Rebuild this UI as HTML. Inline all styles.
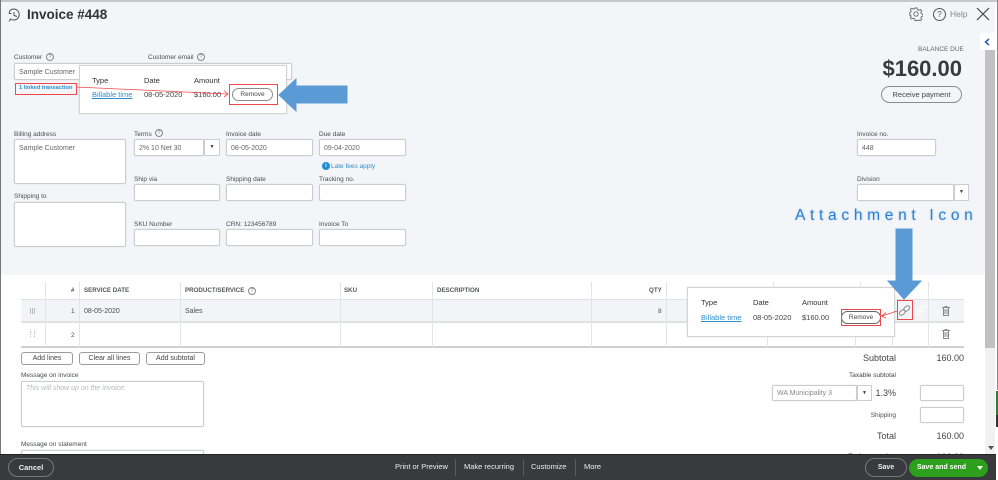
<!DOCTYPE html>
<html><head><meta charset="utf-8"><title>Invoice #448</title>
<style>
html,body{margin:0;padding:0;background:#fff}
#p{position:relative;width:998px;height:480px;overflow:hidden;background:#fff;font-family:"Liberation Sans",sans-serif;color:#444;filter:blur(.35px)}
#p div{position:absolute;box-sizing:border-box;white-space:nowrap}
.l{font-size:6.5px;line-height:9px;color:#4a4c50;margin-top:1px}
.i{background:#fff;border:1px solid #cbcdd0;border-radius:2px;font-size:7px;line-height:17px;padding-left:4px;color:#666;height:17px;box-shadow:0 0 1px #c8cacd}
.h{font-size:6.2px;line-height:9px;font-weight:bold;color:#55575b}
.v{background:#e3e5e8;width:1px}
.b{background:#fff;border:1px solid #9a9c9f;border-radius:3px;font-size:7px;line-height:11px;height:13px;text-align:center;color:#444}
.pop{background:#fff;border:1px solid #d3d4d6}
.lnk{color:#2b8fce;text-decoration:underline;font-size:7.5px;line-height:10px}
.t{font-size:7.5px;line-height:10px;color:#444}
.tb{font-size:7.5px;line-height:10px;color:#333}
.rm{background:#fff;border:1px solid #8a8c8f;border-radius:7px;text-align:center;font-size:6.5px;color:#444}
.red{border:1px solid #f0474c}
.q{border:1px solid #888;border-radius:50%;width:8px;height:8px;font-size:5.5px;line-height:6px;text-align:center;color:#777}
.f{color:#eee;font-size:7.5px;line-height:10px;top:462px}
.sep{background:#5b5c60;width:1px;top:459px;height:17px}
.s{font-size:9px;line-height:11px;color:#444;text-align:right}
</style></head><body><div id="p">
<div style="left:0;top:0;width:998px;height:2px;background:#c6c7c9"></div>
<div style="left:0;top:2px;width:985px;height:273px;background:#f4f5f8"></div>
<div style="left:0;top:0;width:1px;height:455px;background:#777"></div>
<div style="left:985px;top:2px;width:10px;height:48px;background:#f4f5f8"></div>
<div style="left:985px;top:50px;width:10px;height:298px;background:#c1c1c1"></div>
<div style="left:985px;top:348px;width:10px;height:107px;background:#f1f1f1"></div>
<div style="left:988px;top:446px;width:0;height:0;border-left:3px solid transparent;border-right:3px solid transparent;border-top:4px solid #555"></div>
<div style="left:997px;top:0;width:1px;height:390px;background:#888"></div>
<div style="left:996px;top:391px;width:2px;height:24px;background:#2e7d32"></div>
<div style="left:996px;top:415px;width:2px;height:12px;background:#333"></div>
<div style="left:980px;top:33px;width:15px;height:17px;background:#fff"></div>
<svg style="position:absolute;left:984px;top:38px" width="6" height="8" fill="none" stroke="#2a5db0" stroke-width="1.500"><path d="M5 1L1.500 4L5 7"/></svg>

<svg style="position:absolute;left:7px;top:7px" width="15" height="16" viewBox="0 0 15 16" fill="none" stroke="#555" stroke-width="1"><path d="M3 3.500A5.500 5.500 0 1 1 3.500 12L2 14.500M3 3.500L2 6.500M2 6.500H4.500"/><path d="M7 5V8.500L10 9.500"/></svg>
<div style="left:27px;top:6px;font-size:13.5px;line-height:17px;font-weight:bold;color:#333">Invoice #448</div>

<svg style="position:absolute;left:909px;top:7px" width="14" height="14" viewBox="0 0 14 14" fill="none" stroke="#666" stroke-width=".9"><circle cx="7" cy="7" r="2.200"/><path d="M6 1h2l.4 1.700 1.500.7 1.500-.9 1.300 1.400-.9 1.500.6 1.400 1.600.4v2l-1.600.4-.6 1.500.9 1.400-1.300 1.400-1.500-.9-1.500.6L8 13.500H6l-.4-1.700-1.500-.6-1.500.9-1.300-1.400.9-1.400-.6-1.500L0 7.900v-2l1.600-.4.6-1.400-.9-1.500L2.600 1.200l1.500.9 1.500-.7z"/></svg>
<div style="left:933px;top:8px;width:13px;height:13px;border:1px solid #555;border-radius:50%;font-size:8px;line-height:11px;text-align:center;color:#555">?</div>
<div style="left:950px;top:9px;font-size:8.5px;line-height:10px;color:#888">Help</div>
<svg style="position:absolute;left:976px;top:7px" width="14" height="14" viewBox="0 0 14 14" stroke="#444" stroke-width="1.200"><path d="M1 1L13 13M13 1L1 13"/></svg>

<div class="l" style="left:918px;top:44px;color:#666">BALANCE DUE</div>
<div style="left:860px;top:57px;width:102px;text-align:right;font-size:22px;line-height:24px;font-weight:bold;color:#393a3d">$160.00</div>
<div style="left:881px;top:86px;width:81px;height:17px;border:1px solid #8a8c8f;border-radius:9px;font-size:7.5px;line-height:15px;text-align:center;color:#444">Receive payment</div>

<div class="l" style="left:14px;top:52px">Customer</div><div class="q" style="left:46px;top:53px">?</div>
<div class="l" style="left:148px;top:52px">Customer email</div><div class="q" style="left:197px;top:53px">?</div>
<div class="i" style="left:14px;top:63px;width:278px;height:17px">Sample Customer</div>

<div class="pop" style="left:79px;top:65px;width:208px;height:49px;box-shadow:0 0 1px #ccc"></div>
<div class="tb" style="left:92px;top:76px">Type</div><div class="tb" style="left:144px;top:76px">Date</div><div class="tb" style="left:194px;top:76px">Amount</div>
<div class="lnk" style="left:92px;top:90px">Billable time</div><div class="t" style="left:144px;top:90px">08-05-2020</div><div class="t" style="left:194px;top:90px">$160.00</div>
<div class="rm" style="left:232px;top:88px;width:41px;height:13px;line-height:11px">Remove</div>
<div class="red" style="left:229px;top:84px;width:49px;height:21px"></div>
<div class="red" style="left:15px;top:83px;width:62px;height:12px"></div>
<div style="left:19px;top:84px;font-size:5.7px;line-height:9px;font-weight:bold;color:#2b8fce">1 linked transaction</div>
<svg style="position:absolute;left:75px;top:85px" width="155" height="16" fill="none" stroke="#f0474c" stroke-width=".8"><path d="M1 2L153 9M149 5.500L153 9L149 12"/></svg>
<svg style="position:absolute;left:278px;top:78px" width="70" height="34"><path d="M1 17L18 1V8H69V25H18V33Z" fill="#5b9bd5" stroke="#5b9bd5"/></svg>

<div class="l" style="left:14px;top:129px">Billing address</div>
<div class="i" style="left:14px;top:139px;width:112px;height:45px">Sample Customer</div>
<div class="l" style="left:14px;top:191px">Shipping to</div>
<div class="i" style="left:14px;top:202px;width:112px;height:45px"></div>

<div class="l" style="left:134px;top:129px">Terms</div><div class="q" style="left:155px;top:129px">?</div>
<div class="i" style="left:134px;top:139px;width:70px">2% 10 Net 30</div>
<div style="left:204px;top:139px;width:16px;height:17px;background:#fff;border:1px solid #cbcdd0;font-size:5px;line-height:15px;text-align:center;color:#333">▼</div>
<div class="l" style="left:226px;top:129px">Invoice date</div><div class="i" style="left:226px;top:139px;width:87px">08-05-2020</div>
<div class="l" style="left:319px;top:129px">Due date</div><div class="i" style="left:319px;top:139px;width:87px">09-04-2020</div>
<div style="left:322px;top:162px;width:8px;height:8px;background:#1d8fd6;border-radius:50%;color:#fff;font-size:5px;line-height:8px;text-align:center;font-weight:bold">i</div>
<div style="left:331px;top:162px;font-size:6.5px;line-height:9px;color:#2b8fce">Late fees apply</div>

<div class="l" style="left:134px;top:174px">Ship via</div><div class="i" style="left:134px;top:184px;width:86px"></div>
<div class="l" style="left:226px;top:174px">Shipping date</div><div class="i" style="left:226px;top:184px;width:87px"></div>
<div class="l" style="left:319px;top:174px">Tracking no.</div><div class="i" style="left:319px;top:184px;width:87px"></div>
<div class="l" style="left:134px;top:219px">SKU Number</div><div class="i" style="left:134px;top:229px;width:86px"></div>
<div class="l" style="left:226px;top:219px">CRN: 123456789</div><div class="i" style="left:226px;top:229px;width:87px"></div>
<div class="l" style="left:319px;top:219px">Invoice To</div><div class="i" style="left:319px;top:229px;width:87px"></div>

<div class="l" style="left:857px;top:129px">Invoice no.</div><div class="i" style="left:857px;top:139px;width:79px">448</div>
<div class="l" style="left:857px;top:174px">Division</div><div class="i" style="left:857px;top:184px;width:97px"></div>
<div style="left:954px;top:184px;width:15px;height:17px;background:#fff;border:1px solid #cbcdd0;font-size:5px;line-height:15px;text-align:center;color:#333">▼</div>

<div style="left:21px;top:299px;width:943px;height:24px;background:#f3f4f7;border-top:1px solid #dfe0e3;border-bottom:2px solid #dfe0e3"></div>
<div style="left:21px;top:346px;width:943px;height:2px;background:#cfd0d2"></div>
<div class="v" style="left:45px;top:282px;height:65px"></div>
<div class="v" style="left:79px;top:282px;height:65px"></div>
<div class="v" style="left:180px;top:282px;height:65px"></div>
<div class="v" style="left:340px;top:282px;height:65px"></div>
<div class="v" style="left:432px;top:282px;height:65px"></div>
<div class="v" style="left:591px;top:282px;height:65px"></div>
<div class="v" style="left:666px;top:282px;height:65px"></div>
<div class="v" style="left:773px;top:282px;height:6px"></div>
<div class="v" style="left:860px;top:282px;height:6px"></div>
<div class="v" style="left:767px;top:336px;height:11px"></div>
<div class="v" style="left:855px;top:336px;height:11px"></div>
<div class="v" style="left:892px;top:336px;height:11px"></div>
<div class="v" style="left:928px;top:282px;height:65px"></div>
<div class="h" style="left:71px;top:286px">#</div><div class="h" style="left:84px;top:286px">SERVICE DATE</div><div class="h" style="left:185px;top:286px">PRODUCT/SERVICE</div><div class="q" style="left:248px;top:287px">?</div>
<div class="h" style="left:344px;top:286px">SKU</div><div class="h" style="left:437px;top:286px">DESCRIPTION</div><div class="h" style="left:649px;top:286px">QTY</div>
<div style="left:30px;top:308px;width:5px;height:6px;border-left:1px solid #bbb;border-right:1px solid #bbb"></div>
<div style="left:32px;top:308px;width:1px;height:6px;background:#bbb"></div>
<div style="left:30px;top:331px;width:5px;height:6px;border-left:1px dotted #bbb;border-right:1px dotted #bbb"></div>
<div class="l" style="left:71px;top:306px">1</div><div class="l" style="left:71px;top:330px">2</div>
<div class="l" style="left:84px;top:306px;font-size:7px">08-05-2020</div><div class="l" style="left:185px;top:306px;font-size:7px">Sales</div><div class="l" style="left:658px;top:306px">8</div>

<svg style="position:absolute;left:942px;top:306px" width="8" height="10" fill="none" stroke="#888"><path d="M0 1.500H8M1.500 1.500V9.500H6.500V1.500M3 1.500V.5H5V1.500M3 3V8M5 3V8"/></svg>
<svg style="position:absolute;left:942px;top:329px" width="8" height="10" fill="none" stroke="#888"><path d="M0 1.500H8M1.500 1.500V9.500H6.500V1.500M3 1.500V.5H5V1.500M3 3V8M5 3V8"/></svg>

<div class="pop" style="left:687px;top:287px;width:208px;height:50px;box-shadow:0 0 1px #ccc"></div>
<div class="tb" style="left:701px;top:298px">Type</div><div class="tb" style="left:753px;top:298px">Date</div><div class="tb" style="left:802px;top:298px">Amount</div>
<div class="lnk" style="left:701px;top:313px">Billable time</div><div class="t" style="left:753px;top:313px">08-05-2020</div><div class="t" style="left:802px;top:313px">$160.00</div>
<div class="rm" style="left:841px;top:311px;width:40px;height:13px;line-height:11px;border-color:#666">Remove</div>
<div class="red" style="left:841px;top:309px;width:40px;height:17px"></div>
<div class="red" style="left:897px;top:300px;width:16px;height:20px"></div>
<svg style="position:absolute;left:898px;top:305px" width="13" height="11" fill="none" stroke="#8a8a8a" stroke-width="1"><rect x="1" y="5.500" width="6.500" height="4" rx="2" transform="rotate(-40 4.250 7.500)"/><rect x="5.500" y="1.500" width="6.500" height="4" rx="2" transform="rotate(-40 8.750 3.500)"/></svg>
<svg style="position:absolute;left:914px;top:305px" width="13" height="11" fill="none" stroke="#fff" stroke-width="1"><rect x="1" y="5.500" width="6.500" height="4" rx="2" transform="rotate(-40 4.250 7.500)"/><rect x="5.500" y="1.500" width="6.500" height="4" rx="2" transform="rotate(-40 8.750 3.500)"/></svg>
<svg style="position:absolute;left:880px;top:309px" width="18" height="10" fill="none" stroke="#f0474c" stroke-width=".8"><path d="M17 2L2 7M6 3.500L1.500 7L6 9"/></svg>
<svg style="position:absolute;left:886px;top:228px" width="37" height="72"><path d="M10 1H26V53H35L18 71L2 53H10Z" fill="#5b9bd5" stroke="#5b9bd5"/></svg>
<div style="left:795px;top:206px;font-size:15.5px;line-height:20px;letter-spacing:4.7px;color:#2b7fd0;text-shadow:0 0 2px #a9d0f0">Attachment Icon</div>

<div class="b" style="left:21px;top:352px;width:52px">Add lines</div>
<div class="b" style="left:79px;top:352px;width:61px">Clear all lines</div>
<div class="b" style="left:146px;top:352px;width:59px">Add subtotal</div>
<div class="l" style="left:21px;top:370px">Message on invoice</div>
<div class="i" style="left:21px;top:381px;width:183px;height:46px;font-style:italic;color:#b5b7bb;line-height:14px">This will show up on the invoice.</div>
<div class="l" style="left:21px;top:439px">Message on statement</div>
<div class="i" style="left:21px;top:450px;width:183px;height:10px"></div>

<div class="s" style="left:800px;top:353px;width:96px">Subtotal</div>
<div class="s" style="left:900px;top:353px;width:64px">160.00</div>
<div style="left:800px;top:371px;width:96px;text-align:right;font-size:6.5px;line-height:9px;color:#444">Taxable subtotal</div>
<div class="i" style="left:772px;top:385px;width:85px;height:16px;line-height:15px;color:#888">WA Municipality 3</div>
<div style="left:857px;top:385px;width:15px;height:16px;background:#fff;border:1px solid #cbcdd0;font-size:5px;line-height:14px;text-align:center;color:#333">▼</div>
<div class="s" style="left:870px;top:388px;width:26px">1.3%</div>
<div class="i" style="left:920px;top:385px;width:44px;height:16px"></div>
<div class="l" style="left:800px;top:410px;width:96px;text-align:right">Shipping</div>
<div class="i" style="left:920px;top:407px;width:44px;height:16px"></div>
<div class="s" style="left:800px;top:431px;width:96px">Total</div>
<div class="s" style="left:900px;top:431px;width:64px">160.00</div>
<div class="s" style="left:848px;top:452px;width:48px">Balance due</div>
<div class="s" style="left:900px;top:452px;width:64px">160.00</div>

<div style="left:0;top:454px;width:996px;height:26px;background:#393a3d;border-top:1px solid #222"></div>
<div style="left:8px;top:458px;width:46px;height:19px;border:1px solid #77787b;border-radius:10px;color:#eee;font-size:7.5px;font-weight:bold;line-height:17px;text-align:center">Cancel</div>
<div class="f" style="left:395px">Print or Preview</div><div class="sep" style="left:455px"></div>
<div class="f" style="left:464px">Make recurring</div><div class="sep" style="left:523px"></div>
<div class="f" style="left:531px">Customize</div><div class="sep" style="left:575px"></div>
<div class="f" style="left:584px">More</div>
<div style="left:865px;top:458px;width:42px;height:19px;border:1px solid #77787b;border-radius:10px;color:#eee;font-size:7px;font-weight:bold;line-height:17px;text-align:center">Save</div>
<div style="left:909px;top:459px;width:79px;height:18px;background:#2ca01c;border-radius:9px;color:#fff;font-size:7px;font-weight:bold;line-height:18px;padding-left:8px">Save and send</div>
<div style="left:977px;top:466px;width:0;height:0;border-left:3px solid transparent;border-right:3px solid transparent;border-top:4px solid #fff"></div>
</div></body></html>
